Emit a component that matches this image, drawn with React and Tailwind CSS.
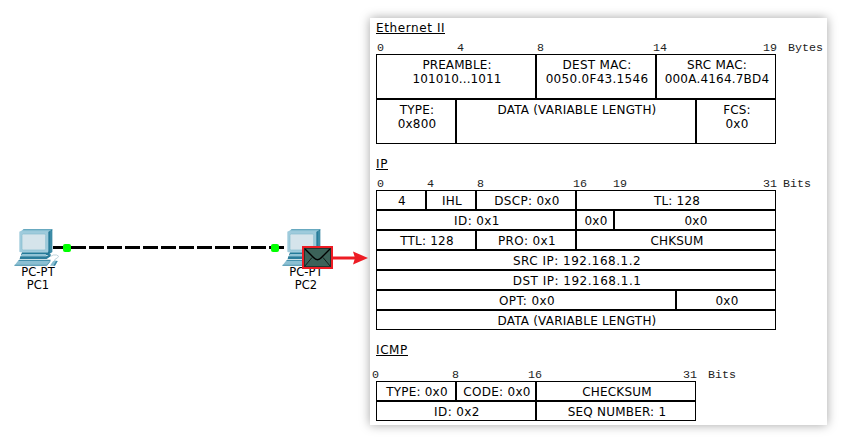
const SANS = "font-['DejaVu_Sans',Verdana,sans-serif] text-[12px] leading-[14px]";

function Computer() {
  return (
    <svg viewBox="0 0 140 114" className="block h-[38px] w-[46.67px]">
      <path d="M16 9L29 1H115L103 9Z" fill="#9bcadb" />
      <path d="M29 1H115V4H25Z" fill="#4f9ab4" />
      <path d="M102 9L115 1V69L102 77Z" fill="#277c99" />
      <path d="M111 5V71" stroke="#69abc1" strokeWidth="2" />
      <path d="M24 70H105L108 78H21Z" fill="#237a99" />
      <path d="M16 8H103V67Q103 70 100 70H19Q16 70 16 67Z" fill="#9fcbdc" />
      <rect x="24" y="15" width="71" height="48" rx="4" fill="#d5e4eb" stroke="#86bccf" strokeWidth="2" />
      <path d="M25 75H95L99 82H19Z" fill="#91c3d5" />
      <path d="M19 82H97L110 74V82L98 90H17Z" fill="#2a7c9a" />
      <path d="M14 93H110L97 110H1Z" fill="#8bbfd2" />
      <path d="M16 92H110L108 95H13Z" fill="#2f829f" />
      <path d="M2 107H98L109 94V98L99 110H1Z" fill="#4f97b0" />
      <path d="M110 82Q117 76 128 78Q138 81 131 86Q119 91 121 98" fill="none" stroke="#b1cbd5" strokeWidth="2.5" />
      <path d="M117 97Q124 93 131 96L123 110H108Z" fill="#86bbcf" />
      <path d="M131 96L123 110H118L126 96Z" fill="#3b8aa7" />
    </svg>
  );
}

function Device({ name, place }) {
  return (
    <div className={`absolute flex w-[48px] flex-col items-center ${place}`}>
      <Computer />
      <div className="mt-[-1px] whitespace-nowrap pl-[2px] text-center font-['DejaVu_Sans',Verdana,sans-serif] text-[11.5px] leading-[13px] tracking-[0.1px]">
        <div>PC-PT</div>
        <div>{name}</div>
      </div>
    </div>
  );
}

function Topology() {
  return (
    <div className="relative h-[441px] w-[370px] shrink-0">
      <svg className="absolute left-[50px] top-[240px] h-[16px] w-[242px]" viewBox="50 240 242 16">
        <path d="M53 247.5H285" stroke="#000" strokeWidth="3" strokeDasharray="15 3" />
      </svg>
      <Device name="PC1" place="left-[13px] top-[229px]" />
      <Device name="PC2" place="left-[281px] top-[229px]" />
      <div className="absolute left-[63px] top-[244px] size-[8px] rounded-[2px] bg-[#00ff00]" />
      <div className="absolute left-[271px] top-[244px] size-[8px] rounded-[2px] bg-[#00ff00]" />
    </div>
  );
}

function Packet() {
  return (
    <svg className="absolute left-[302px] top-[246px] h-[24px] w-[68px]" viewBox="0 0 68 24">
      <rect x="1" y="1" width="29" height="21" fill="#3c6259" stroke="#ed1c24" strokeWidth="2" />
      <path d="M2.5 2.5L11.5 11.5Q15.5 16 19.5 11.5L28.5 2.5" fill="none" stroke="#000" strokeWidth="1.4" />
      <path d="M2.5 20.5L10 11.5M28.5 20.5L21 11.5" fill="none" stroke="#0c1613" strokeWidth="0.9" />
      <path d="M2.5 20.5V2.5H28.5V20.5Z" fill="none" stroke="#1a2b27" strokeWidth="0.8" />
      <path d="M31 12H55" stroke="#ed1c24" strokeWidth="3" />
      <path d="M51 5.5L66 12L51 18.5L53 12Z" fill="#ed1c24" />
    </svg>
  );
}

function Title({ text, track }) {
  return (
    <div className="flex">
      <h2 className={`h-[13px] border-b border-black pt-[2px] font-['DejaVu_Sans',Verdana,sans-serif] text-[12px] leading-[10px] ${track}`}>{text}</h2>
    </div>
  );
}

function Scale({ ticks, margin }) {
  return (
    <div className={`flex whitespace-pre font-['Liberation_Mono',monospace] text-[11.67px] leading-[12px] text-[#222] ${margin}`}>
      {ticks.map(([label, width]) => (
        <span key={label} className={`shrink-0 ${width}`}>{label}</span>
      ))}
    </div>
  );
}

function Row({ cells, height }) {
  return (
    <div className={`flex ${height}`}>
      {cells.map(([text, width, track = "tracking-[0.2px]"], i) => (
        <div key={i} className={`${SANS} shrink-0 whitespace-pre border border-black pl-[2px] pt-[3px] text-center ${width} ${track}`}>
          {text}
        </div>
      ))}
    </div>
  );
}

export default function App() {
  return (
    <div className="relative flex h-[441px] w-[843px] overflow-hidden bg-white text-black">
      <Topology />
      <main className="mt-[18px] h-[407px] w-[457px] shrink-0 bg-white pl-[6px] pt-[3px] shadow-[0_0_10px_rgba(0,0,0,0.36)]">
        <section className="h-[136px]">
          <Title text="Ethernet II" track="tracking-[0.6px]" />
          <Scale margin="ml-[1px] mt-[8px]" ticks={[["0", "w-[80px]"], ["4", "w-[80px]"], ["8", "w-[116px]"], ["14", "w-[110px]"], ["19", "w-[25px]"], ["Bytes", ""]]} />
          <Row height="h-[45px]" cells={[["PREAMBLE:\n101010...1011", "w-[160px]", "tracking-[0.1px]"], ["DEST MAC:\n0050.0F43.1546", "w-[120px]", "tracking-[0.3px]"], ["SRC MAC:\n000A.4164.7BD4", "w-[120px]"]]} />
          <Row height="h-[45px]" cells={[["TYPE:\n0x800", "w-[80px]"], ["DATA (VARIABLE LENGTH)", "w-[240px]"], ["FCS:\n0x0", "w-[80px]"]]} />
        </section>
        <section className="h-[186px]">
          <Title text="IP" track="tracking-[0.8px]" />
          <Scale margin="ml-[1px] mt-[8px]" ticks={[["0", "w-[50px]"], ["4", "w-[50px]"], ["8", "w-[96px]"], ["16", "w-[40px]"], ["19", "w-[150px]"], ["31", "w-[20px]"], ["Bits", ""]]} />
          <Row height="h-[20px]" cells={[["4", "w-[50px]"], ["IHL", "w-[50px]"], ["DSCP: 0x0", "w-[100px]", "tracking-[0.3px]"], ["TL: 128", "w-[200px]"]]} />
          <Row height="h-[20px]" cells={[["ID: 0x1", "w-[200px]", "tracking-[0.4px]"], ["0x0", "w-[38px]"], ["0x0", "w-[162px]"]]} />
          <Row height="h-[20px]" cells={[["TTL: 128", "w-[100px]"], ["PRO: 0x1", "w-[100px]", "tracking-[0.4px]"], ["CHKSUM", "w-[200px]"]]} />
          <Row height="h-[20px]" cells={[["SRC IP: 192.168.1.2", "w-[400px]", "tracking-[0.5px]"]]} />
          <Row height="h-[20px]" cells={[["DST IP: 192.168.1.1", "w-[400px]", "tracking-[0.5px]"]]} />
          <Row height="h-[20px]" cells={[["OPT: 0x0", "w-[300px]", "tracking-[0.4px]"], ["0x0", "w-[100px]"]]} />
          <Row height="h-[20px]" cells={[["DATA (VARIABLE LENGTH)", "w-[400px]"]]} />
        </section>
        <section>
          <Title text="ICMP" track="tracking-[0.6px]" />
          <Scale margin="ml-[-4px] mt-[13px]" ticks={[["0", "w-[80px]"], ["8", "w-[76px]"], ["16", "w-[155px]"], ["31", "w-[25px]"], ["Bits", ""]]} />
          <Row height="h-[20px]" cells={[["TYPE: 0x0", "w-[80px]"], ["CODE: 0x0", "w-[80px]", "tracking-[0.3px]"], ["CHECKSUM", "w-[160px]"]]} />
          <Row height="h-[20px]" cells={[["ID: 0x2", "w-[160px]", "tracking-[0.4px]"], ["SEQ NUMBER: 1", "w-[160px]"]]} />
        </section>
      </main>
      <Packet />
    </div>
  );
}
